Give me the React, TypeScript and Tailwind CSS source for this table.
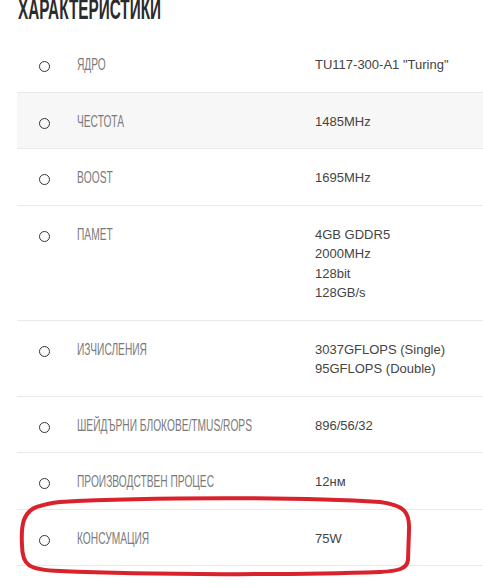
const specs: { label: string; value: string[] }[] = [
  { label: "Ядро", value: ['TU117-300-A1 "Turing"'] },
  { label: "Честота", value: ["1485MHz"] },
  { label: "Boost", value: ["1695MHz"] },
  { label: "Памет", value: ["4GB GDDR5", "2000MHz", "128bit", "128GB/s"] },
  { label: "Изчисления", value: ["3037GFLOPS (Single)", "95GFLOPS (Double)"] },
  { label: "Шейдърни блокове/TMUs/ROPs", value: ["896/56/32"] },
  { label: "Производствен процес", value: ["12нм"] },
  { label: "Консумация", value: ["75W"] },
];

export default function App() {
  return (
    <div className="relative w-[483px] h-[588px] overflow-hidden bg-white font-['Liberation_Sans',Arial,sans-serif]">
      <h2 className="ml-[18px] -mt-[6px] h-[30px] whitespace-nowrap text-[30px] leading-[30px]">
        <span className="inline-block origin-left scale-x-[0.51] font-bold uppercase text-[#2b2b2b]">
          Характеристики
        </span>
      </h2>

      <ul className="ml-[17px] mt-[12px]">
        {specs.map((row, i) => (
          <li
            key={row.label}
            className={`flex pt-[19px] pb-[17px] border-b border-[#e9e9e9] ${
              i === 1 ? "bg-[#f7f7f7]" : "bg-white"
            }`}
          >
            <div className="w-[60px] shrink-0 flex items-start">
              <span className="ml-[22px] mt-[6px] w-[11px] h-[11px] rounded-full border-[1.5px] border-[#333]" />
            </div>
            <div className="w-[238px] shrink-0 whitespace-nowrap text-[17px] leading-[19.5px]">
              <span className="inline-block origin-left scale-x-[0.6] uppercase text-[#7a7a7a]">
                {row.label}
              </span>
            </div>
            <div className="text-[13px] leading-[19.5px] text-[#444]">
              {row.value.map((v) => (
                <div key={v}>{v}</div>
              ))}
            </div>
          </li>
        ))}
      </ul>

      <svg
        className="absolute left-0 top-0 pointer-events-none"
        width="483"
        height="588"
        viewBox="0 0 483 588"
      >
        <path
          d="M60 502 C 150 497, 300 497, 380 502 C 404 505, 410 512, 409 530 L 408 560 C 407 569, 398 571, 380 572 C 300 575, 150 575, 60 571 C 28 570, 22 565, 22 545 C 21 527, 22 510, 40 506 C 46 504, 52 503, 60 502 Z"
          fill="none"
          stroke="#d8222c"
          strokeWidth="4"
          strokeLinejoin="round"
        />
      </svg>
    </div>
  );
}
